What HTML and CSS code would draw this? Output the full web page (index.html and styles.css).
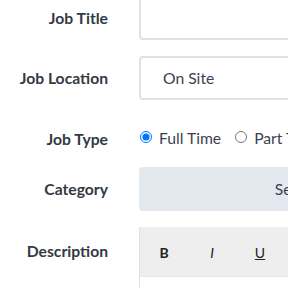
FILE: index.html
```html
<!DOCTYPE html>
<html lang="en">
<head>
  <meta charset="UTF-8" />
  <title>Post a Job</title>
  <link rel="stylesheet" href="styles.css">
</head>
<body>
  <form class="job-form">
    <div class="form-row row-title">
      <label class="form-label">Job Title</label>
      <input type="text" class="text-input" />
    </div>

    <div class="form-row row-location">
      <label class="form-label">Job Location</label>
      <input type="text" class="text-input" value="On Site" />
    </div>

    <div class="form-row row-type">
      <label class="form-label">Job Type</label>
      <div class="radio-group">
        <label class="radio-option"><input type="radio" name="type" checked /> Full Time</label>
        <label class="radio-option"><input type="radio" name="type" /> Part Time</label>
      </div>
    </div>

    <div class="form-row row-category">
      <label class="form-label">Category</label>
      <div class="select-box">Select Category</div>
    </div>

    <div class="form-row row-desc">
      <label class="form-label">Description</label>
      <div class="editor">
        <div class="editor-toolbar">
          <span class="tool tool-b">B</span>
          <span class="tool tool-i">I</span>
          <span class="tool tool-u">U</span>
          <span class="tool">S</span>
        </div>
        <div class="editor-body"></div>
      </div>
    </div>
  </form>
</body>
</html>
```

FILE: styles.css
```css
:root {
  --label: #333a45;
  --text: #3a4250;
  --border: #dde2e8;
  --select-bg: #e4e8ef;
  --toolbar-bg: #eeeeee;
}

body {
  margin: 0;
  padding: 0;
  background: #ffffff;
  font-family: Lato, "Open Sans", sans-serif;
  overflow: hidden;
  width: 288px;
  height: 288px;
}

.job-form {
  margin-top: -4px;
  width: 600px;
}

.form-row {
  display: flex;
  align-items: center;
  gap: 31px;
}

.form-label {
  width: 108px;
  flex-shrink: 0;
  text-align: right;
  font-size: 15.7px;
  font-weight: 700;
  color: var(--label);
}

.text-input {
  box-sizing: border-box;
  width: 400px;
  height: 44px;
  border: 2px solid var(--border);
  border-radius: 4px;
  padding: 0 22px;
  font-family: inherit;
  font-size: 15.7px;
  color: var(--text);
  outline: none;
}

.row-title {
  margin-bottom: 16px;
}

.row-location {
  margin-bottom: 16px;
}

.row-type {
  height: 44px;
  margin-bottom: 6px;
  padding-top: 1px;
}

.radio-group {
  display: flex;
  gap: 13px;
  font-size: 15.7px;
  color: var(--text);
  margin-top: -2px;
}

.radio-option {
  display: flex;
  align-items: center;
  white-space: nowrap;
}

.radio-option input {
  margin: 0 7px 3px 1px;
  width: 12px;
  height: 12px;
}

.select-box {
  box-sizing: border-box;
  width: 380px;
  height: 44px;
  background: var(--select-bg);
  border-radius: 4px;
  display: flex;
  align-items: center;
  justify-content: center;
  font-size: 15.7px;
  color: var(--text);
}

.row-category {
  margin-bottom: 16px;
}

.row-desc {
  align-items: flex-start;
}

.row-desc .form-label {
  margin-top: 15px;
}

.editor {
  width: 400px;
  border-left: 1px solid var(--border);
}

.editor-toolbar {
  height: 49px;
  background: var(--toolbar-bg);
  border-bottom: 1px solid #e6e6e6;
  display: flex;
  align-items: center;
}

.tool {
  width: 48px;
  text-align: center;
  font-size: 14px;
  color: #222222;
  margin-top: 2px;
}

.tool-b {
  font-weight: 700;
}

.tool-i {
  font-style: italic;
}

.tool-u {
  text-decoration: underline;
}

.editor-body {
  height: 60px;
}
```
